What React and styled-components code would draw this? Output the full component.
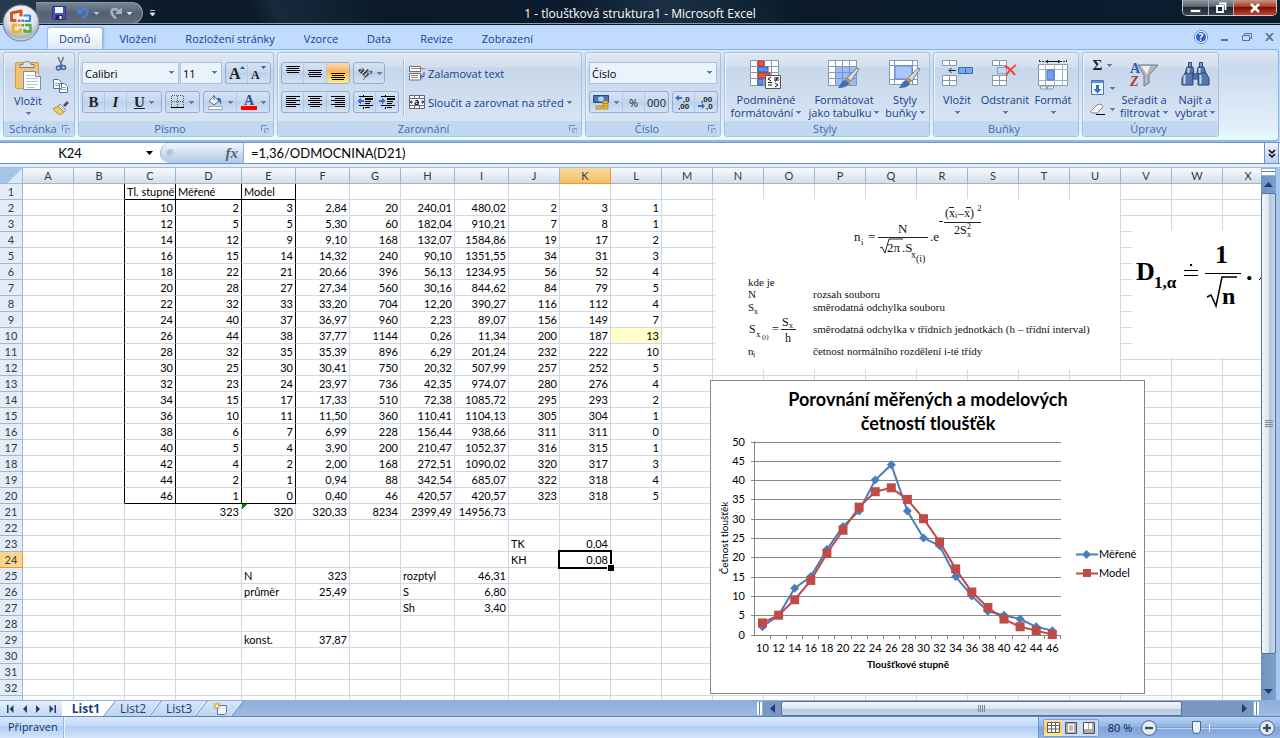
import React, { useState } from 'react';
import styled, { createGlobalStyle, css } from 'styled-components';

const GlobalStyle = createGlobalStyle`
  * { box-sizing: border-box; }
  body {
    margin: 0;
    font-family: 'Open Sans', 'Noto Sans', sans-serif;
    font-size: 11px;
    color: #15428b;
    background: #bfdbff;
  }
  button, input, select {
    font: inherit;
    color: inherit;
    margin: 0;
    padding: 0;
    border: none;
    background: none;
    outline: none;
  }
  svg { display: block; }
`;

const sheetFont = "Lato, 'Open Sans', sans-serif";

/* ---------- data ---------- */

const columns = [
  ['A', 51], ['B', 51], ['C', 51], ['D', 66], ['E', 54], ['F', 54], ['G', 51], ['H', 54],
  ['I', 54], ['J', 51], ['K', 51], ['L', 51], ['M', 51], ['N', 51], ['O', 51], ['P', 51],
  ['Q', 51], ['R', 51], ['S', 51], ['T', 51], ['U', 51], ['V', 51], ['W', 51], ['X', 51],
];

const rows = [
  ['10', '2', '3', '2,84', '20', '240,01', '480,02', '2', '3', '1'],
  ['12', '5', '5', '5,30', '60', '182,04', '910,21', '7', '8', '1'],
  ['14', '12', '9', '9,10', '168', '132,07', '1584,86', '19', '17', '2'],
  ['16', '15', '14', '14,32', '240', '90,10', '1351,55', '34', '31', '3'],
  ['18', '22', '21', '20,66', '396', '56,13', '1234,95', '56', '52', '4'],
  ['20', '28', '27', '27,34', '560', '30,16', '844,62', '84', '79', '5'],
  ['22', '32', '33', '33,20', '704', '12,20', '390,27', '116', '112', '4'],
  ['24', '40', '37', '36,97', '960', '2,23', '89,07', '156', '149', '7'],
  ['26', '44', '38', '37,77', '1144', '0,26', '11,34', '200', '187', '13'],
  ['28', '32', '35', '35,39', '896', '6,29', '201,24', '232', '222', '10'],
  ['30', '25', '30', '30,41', '750', '20,32', '507,99', '257', '252', '5'],
  ['32', '23', '24', '23,97', '736', '42,35', '974,07', '280', '276', '4'],
  ['34', '15', '17', '17,33', '510', '72,38', '1085,72', '295', '293', '2'],
  ['36', '10', '11', '11,50', '360', '110,41', '1104,13', '305', '304', '1'],
  ['38', '6', '7', '6,99', '228', '156,44', '938,66', '311', '311', '0'],
  ['40', '5', '4', '3,90', '200', '210,47', '1052,37', '316', '315', '1'],
  ['42', '4', '2', '2,00', '168', '272,51', '1090,02', '320', '317', '3'],
  ['44', '2', '1', '0,94', '88', '342,54', '685,07', '322', '318', '4'],
  ['46', '1', '0', '0,40', '46', '420,57', '420,57', '323', '318', '5'],
];

const cells = {
  C1: 'Tl. stupně', D1: 'Měřené', E1: 'Model',
  D21: '323', E21: '320', F21: '320,33', G21: '8234', H21: '2399,49', I21: '14956,73',
  J23: 'TK', K23: '0,04', J24: 'KH', K24: '0,08',
  E25: 'N', F25: '323', H25: 'rozptyl', I25: '46,31',
  E26: 'průměr', F26: '25,49', H26: 'S', I26: '6,80',
  H27: 'Sh', I27: '3,40',
  E29: 'konst.', F29: '37,87',
};
rows.forEach((row, r) => row.forEach((v, c) => { cells[columns[c + 2][0] + (r + 2)] = v; }));

const measured = rows.map(r => Number(r[1]));
const model = rows.map(r => Number(r[2]));

/* ---------- title bar ---------- */

const Window = styled.div`
  display: flex;
  flex-direction: column;
  height: 100vh;
  overflow: hidden;
  position: relative;
`;

const TitleBar = styled.header`
  flex: none;
  height: 25px;
  display: flex;
  justify-content: space-between;
  align-items: flex-start;
  position: relative;
  border-bottom: 1px solid #0d1620;
  background: linear-gradient(60deg, #2b3f51 0%, #0c1c2c 12%, #0b1b2b 20%, #172a3c 22%, #0a1a2a 30%,
    #0b1b2c 45%, #1b3045 52%, #122638 58%, #0a1a2b 62%, #0b1d30 100%);
  box-shadow: inset 0 -1px 0 #8d98a1;
`;

const Title = styled.h1`
  position: absolute;
  inset: 0;
  margin: 0;
  text-align: center;
  font-size: 12px;
  font-weight: 400;
  line-height: 27px;
  color: #fff;
  pointer-events: none;
`;

const QuickAccess = styled.div`
  display: flex;
  align-items: center;
  margin-top: 2px;
  padding-left: 36px;
`;

const QuickPill = styled.div`
  display: flex;
  align-items: center;
  gap: 4px;
  height: 22px;
  padding: 0 10px 0 16px;
  border: 1px solid #8a97a5;
  border-left: none;
  border-radius: 0 11px 11px 0;
  background: linear-gradient(#7a8593, #536173 50%, #5d6b7d);
`;

const IconButton = styled.button`
  display: flex;
  align-items: center;
  justify-content: center;
`;

const MenuButton = styled(IconButton)`
  gap: 5px;
`;

const MoreButton = styled(IconButton)`
  margin-left: 6px;
`;

const Orb = styled.button`
  position: absolute;
  left: 2px;
  top: 4px;
  z-index: 2;
`;

const WindowButtons = styled.div`
  display: flex;
  height: 16px;
  margin-right: 3px;
  border: 1px solid #c3c9cf;
  border-top: none;
  border-radius: 0 0 5px 5px;
  overflow: hidden;
`;

const WindowButton = styled(IconButton)`
  width: ${p => (p.$close ? 43 : 25)}px;
  border-left: ${p => (p.$first ? 'none' : '1px solid #aab2ba')};
  background: ${p => (p.$close
    ? 'linear-gradient(#c99487, #a83a25 45%, #7c1005 50%, #c8412a)'
    : 'linear-gradient(#8f979f, #56616c 45%, #1a2632 50%, #39444f)')};
`;

/* ---------- ribbon ---------- */

const TabRow = styled.nav`
  flex: none;
  height: 24px;
  display: flex;
  align-items: flex-end;
  justify-content: space-between;
  padding-left: 47px;
  background: #bfdbff;
`;

const Tabs = styled.div`
  display: flex;
  gap: 5px;
`;

const Tab = styled.button`
  height: 22px;
  padding: 0 11px;
  font-size: 11px;
  line-height: 20px;
  border: 1px solid transparent;
  border-bottom: none;
  border-radius: 3px 3px 0 0;
  ${p => p.$active && css`
    border-color: #9bbbe3;
    background: linear-gradient(#fff, #eff5fc 50%, #dce7f5);
    box-shadow: 1px 0 2px #8fb4e0;
  `}
`;

const DocButtons = styled.div`
  display: flex;
  align-items: center;
  height: 24px;
  gap: 13px;
  padding-right: 6px;
`;

const Ribbon = styled.section`
  flex: none;
  height: 92px;
  display: flex;
  gap: 3px;
  padding: 2px 3px;
  margin: 0 1px 1px 0;
  border: solid #8db2e3;
  border-width: 1px 1px 1px 0;
  border-radius: 0 4px 4px 0;
  background: linear-gradient(#dbe6f4, #cfdded 15%, #c9d9ee 18%, #e4f0fa 88%, #e4ffff);
  box-shadow: 0 1px 0 #9ebde3;
`;

const GroupBox = styled.fieldset`
  display: flex;
  flex-direction: column;
  justify-content: space-between;
  width: ${p => p.$width}px;
  height: 85px;
  margin: 0;
  padding: 0;
  min-width: 0;
  border: 1px solid #a7c2e0;
  border-radius: 3px;
  background: linear-gradient(#dfe8f4, #d3dfee 17%, #c7d6ea 18%, #dbe8f7);
  box-shadow: inset 1px 1px 0 #edf3fa;
`;

const GroupBody = styled.div`
  flex: 1;
  display: flex;
  padding: ${p => p.$pad || '9px 3px 0 3px'};
  gap: ${p => p.$gap ?? 4}px;
`;

const GroupLabel = styled.div`
  display: flex;
  align-items: center;
  height: 15px;
  padding-right: 4px;
  color: #3e6aaa;
  background: #c1d8f0;
  border-radius: 0 0 3px 3px;
  span {
    flex: 1;
    text-align: center;
    line-height: 15px;
  }
`;

const Stack = styled.div`
  display: flex;
  flex-direction: column;
  gap: ${p => p.$gap ?? 7}px;
`;

const ToolRow = styled.div`
  display: flex;
  gap: 3px;
`;

const ComboPair = styled.div`
  display: flex;
  gap: 1px;
`;

const ButtonSet = styled.div`
  display: flex;
  height: 22px;
  border: 1px solid #8fafd8;
  border-radius: 3px;
  background: linear-gradient(#d6e3f3, #c6d8ee 45%, #bcd0ea 50%, #d0e2f5);
  overflow: hidden;
`;

const ToolButton = styled(IconButton)`
  width: ${p => p.$w || 22}px;
  gap: 4px;
  color: #1b2430;
  border-right: 1px solid #b3cae6;
  &:last-child { border-right: none; }
  ${p => p.$on && css`
    background: linear-gradient(#fbdbb5, #feb456 40%, #fdc85f 60%, #ffe88c);
  `}
`;

const Letter = styled.span`
  font-family: 'Liberation Serif', serif;
  font-size: 15px;
  line-height: 16px;
  font-weight: 700;
  font-style: ${p => (p.$italic ? 'italic' : 'normal')};
  text-decoration: ${p => (p.$under ? 'underline' : 'none')};
  color: ${p => p.$color || '#1b2430'};
`;

const SelectWrap = styled.label`
  position: relative;
  display: flex;
  width: ${p => p.$w}px;
  height: 22px;
  border: 1px solid #abc1de;
  background: #eaf2fb;
  color: #000;
  select {
    appearance: none;
    width: 100%;
    padding: 0 12px 0 2px;
  }
  svg {
    position: absolute;
    right: 4px;
    top: 8px;
    pointer-events: none;
  }
`;

const Separator = styled.i`
  width: 2px;
  height: 56px;
  margin-top: -3px;
  border-left: 1px solid #a3bfe0;
  border-right: 1px solid #f0f6fc;
`;

const TextButton = styled.button`
  display: flex;
  align-items: center;
  gap: 3px;
  height: 22px;
  white-space: nowrap;
`;

const BigButton = styled.button`
  display: flex;
  flex-direction: column;
  align-items: center;
  width: ${p => p.$w}px;
  padding-top: 3px;
  line-height: 13px;
  white-space: nowrap;
  > svg { margin-bottom: 3px; }
`;

const LabelLine = styled.span`
  display: flex;
  align-items: center;
  gap: 3px;
  height: 13px;
`;

/* ---------- formula bar ---------- */

const FormulaBar = styled.div`
  flex: none;
  display: flex;
  height: 22px;
  border: solid #6b93c9;
  border-width: 1px 0;
  background: #fff;
  color: #000;
  font-family: ${sheetFont};
  font-size: 13px;
`;

const NameBox = styled.div`
  display: flex;
  width: 160px;
  align-items: center;
  input {
    width: 140px;
    text-align: center;
  }
`;

const FxZone = styled.div`
  display: flex;
  align-items: center;
  justify-content: space-between;
  width: 84px;
  padding: 0 5px;
  border: solid #8fb0d9;
  border-width: 0 1px 0 1px;
  border-radius: 10px 0 0 10px;
  background: linear-gradient(#f3f7fc, #cfdef1 50%, #afc9ea);
`;

const Knob = styled.i`
  width: 9px;
  height: 9px;
  border-radius: 50%;
  background: radial-gradient(circle at 35% 35%, #b4bac4, #dfe5ed);
`;

const FormulaInput = styled.input`
  flex: 1;
  padding-left: 7px;
`;

const ExpandButton = styled(IconButton)`
  width: 15px;
  margin-right: 1px;
  border: 1px solid #6b93c9;
  border-width: 0 1px;
  background: linear-gradient(#eef4fb, #b8cfec);
`;

const BarGap = styled.div`
  flex: none;
  height: 4px;
  background: #e3edf9;
  border-bottom: 1px solid #9ebbdd;
`;

/* ---------- sheet ---------- */

const SheetArea = styled.main`
  flex: 1;
  min-height: 0;
  display: flex;
  background: #a9c7ee;
  padding-right: 4px;
`;

const Viewport = styled.div`
  flex: 1;
  min-width: 0;
  position: relative;
  overflow: hidden;
  background: #fff;
`;

const Grid = styled.table`
  table-layout: fixed;
  width: 1247px;
  border-collapse: separate;
  border-spacing: 0;
  font-family: ${sheetFont};
  font-size: 11px;
  color: #000;
`;

const HeadCell = styled.th`
  height: 16px;
  padding: 0;
  line-height: 15px;
  font-weight: 400;
  color: #27413e;
  border-right: 1px solid #9eb6ce;
  border-bottom: 1px solid #9eb6ce;
  background: ${p => (p.$row ? '#e4ecf7' : 'linear-gradient(#f8fafd, #d5deea)')};
  ${p => p.$on && css`
    background: ${p.$row ? '#ffd58d' : 'linear-gradient(#f9d99f, #f1c15f)'};
    border-color: #f29436;
  `}
`;

const Corner = styled(HeadCell)`
  background: linear-gradient(135deg, #a9c4e9 62%, #dbe8f8 62%);
`;

const Cell = styled.td`
  position: relative;
  height: 16px;
  padding: 0 2px;
  line-height: 15px;
  white-space: nowrap;
  overflow: ${p => (p.$selected ? 'visible' : 'hidden')};
  text-align: ${p => (p.$num ? 'right' : 'left')};
  border-right: 1px solid ${p => (p.$darkRight ? '#000' : '#d0d7e5')};
  border-bottom: 1px solid ${p => (p.$darkBottom ? '#000' : '#d0d7e5')};
  background: ${p => (p.$mark ? '#ffffcc' : 'transparent')};
  ${p => p.$warn && css`
    background: linear-gradient(135deg, #008000 4px, transparent 4px);
  `}
  ${p => p.$selected && css`
    z-index: 1;
    &::before {
      content: '';
      position: absolute;
      inset: -2px;
      border: 2px solid #000;
    }
    &::after {
      content: '';
      position: absolute;
      right: -4px;
      bottom: -4px;
      width: 6px;
      height: 6px;
      background: #000;
      border: solid #fff;
      border-width: 1px 0 0 1px;
    }
  `}
`;

const Floating = styled.figure`
  position: absolute;
  left: ${p => p.$x}px;
  top: ${p => p.$y}px;
  margin: 0;
  background: #fff;
`;

const VScroll = styled.div`
  width: 15px;
  display: flex;
  flex-direction: column;
  align-items: center;
  background: linear-gradient(90deg, #6f93c1, #7d9fcb);
  button { height: 17px; }
`;

const SplitHandle = styled.i`
  width: ${p => (p.$h ? 7 : 15)}px;
  height: ${p => (p.$h ? 15 : 8)}px;
  background: ${p => (p.$h
    ? 'linear-gradient(90deg, #fff 2px, #5d84b8 2px, #5d84b8 3px, #fff 3px)'
    : 'linear-gradient(#fff 2px, #5d84b8 2px, #5d84b8 3px, #fff 3px)')};
  border: 1px solid #8fb0d9;
`;

const VThumb = styled.div`
  width: 15px;
  flex: 0 1 461px;
  display: flex;
  align-items: center;
  justify-content: center;
  border: 1px solid #54709b;
  border-radius: 2px;
  background: linear-gradient(90deg, #f3f6fa, #dde5ee 50%, #b0c4da 55%, #c8d8ea);
`;

const VSpace = styled.div`
  flex: 1;
`;

/* ---------- bottom ---------- */

const SheetBar = styled.div`
  flex: none;
  display: flex;
  height: 17px;
  padding-right: 20px;
  border-top: 1px solid #8db0dd;
  border-bottom: 1px solid #5c86bf;
  background: linear-gradient(#8eaedb, #9fbbe2);
`;

const NavButtons = styled.div`
  display: flex;
  align-items: center;
  justify-content: space-around;
  width: 62px;
  padding: 0 2px;
  background: linear-gradient(#e6effa, #c2d8f3);
`;

const SheetTabs = styled.div`
  flex: 1;
  display: flex;
  overflow: hidden;
`;

const SheetTab = styled.button`
  position: relative;
  z-index: ${p => (p.$active ? 1 : 0)};
  height: 15px;
  width: ${p => p.$w}px;
  font-size: 12px;
  line-height: 15px;
  font-weight: ${p => (p.$active ? 700 : 400)};
  color: #1c3f7c;
  > span, > svg { position: relative; margin: 0 auto; }
  &::before {
    content: '';
    position: absolute;
    inset: 0 0 0 ${p => (p.$active ? '-10px' : '0')};
    transform: skewX(-38deg);
    border-right: 1px solid #6d93c6;
    background: ${p => (p.$active ? '#fff' : 'linear-gradient(#d8e6f7, #bdd3ef)')};
    box-shadow: inset -1px 0 0 #fff;
  }
`;

const HScroll = styled.div`
  flex: 0 1 504px;
  display: flex;
  align-items: center;
  background: #7897c2;
`;

const HThumb = styled.div`
  flex: 0 1 401px;
  height: 15px;
  display: flex;
  align-items: center;
  justify-content: center;
  border: 1px solid #54709b;
  border-radius: 2px;
  background: linear-gradient(#f3f6fa, #dbe3ed 50%, #b3c6dc 55%, #c3d4e7);
`;

const ArrowButton = styled(IconButton)`
  width: 18px;
  height: 15px;
`;

const StatusBar = styled.footer`
  flex: none;
  display: flex;
  height: 21px;
  background: linear-gradient(#d9e8fb, #c5dcf8 40%, #b0cdf5 45%, #d3e4fa);
`;

const StatusText = styled.div`
  width: 64px;
  padding-left: 8px;
  line-height: 20px;
  color: #15325f;
  border-right: 1px solid #9ab9e2;
`;

const StatusSpace = styled.div`
  flex: 1;
  border-left: 1px solid #eef5fd;
`;

const StatusTools = styled.div`
  display: flex;
  align-items: center;
  width: 242px;
  padding: 0 5px 0 4px;
  border-left: 1px solid #6c93c8;
  background: linear-gradient(#b9d2f3, #92b4e3 45%, #7ea3d8 50%, #93b5e4);
  color: #0f2450;
`;

const ViewButtons = styled.div`
  display: flex;
  height: 18px;
  border: 1px solid #7d9fcc;
  border-radius: 2px;
  background: #cbdcf2;
`;

const ViewButton = styled(IconButton)`
  width: 18px;
  background: ${p => (p.$on ? 'linear-gradient(#fbe0b0, #ffc552 50%, #ffe99a)' : 'none')};
`;

const ZoomText = styled.span`
  width: 42px;
  text-align: center;
`;

const ZoomSlider = styled.input`
  appearance: none;
  flex: 1;
  min-width: 0;
  height: 18px;
  background: linear-gradient(90deg, transparent 52px, #e8f0fa 52px, #e8f0fa 53px, transparent 53px) center / 100% 8px no-repeat,
    linear-gradient(#5e85bd, #e8f0fa) center / 100% 2px no-repeat;
  &::-webkit-slider-thumb {
    appearance: none;
    width: 9px;
    height: 13px;
    background: #e9f1fb;
    border: 1px solid #3f659b;
    border-radius: 1px 1px 5px 5px;
  }
`;

/* ---------- icons ---------- */

const Arrow = ({ color = '#567db1' }) => (
  <svg width="5" height="3" viewBox="0 0 5 3" shapeRendering="crispEdges"><path d="M0 0h5L2.5 3z" fill={color} /></svg>
);

const Launcher = () => (
  <svg width="8" height="8" viewBox="0 0 8 8">
    <path d="M.5 6V.5H6" fill="none" stroke="#6d91bf" />
    <path d="M3 3h5v5H3z" fill="#86a6cf" />
    <path d="M4 4l3 3M7 4.5V7H4.5" fill="none" stroke="#fff" strokeWidth=".8" />
  </svg>
);

const OfficeLogo = () => (
  <svg width="38" height="38" viewBox="0 0 38 38">
    <defs>
      <radialGradient id="orb" cx=".5" cy=".3" r=".75">
        <stop offset="0" stopColor="#fff" /><stop offset=".55" stopColor="#dde3ea" /><stop offset=".8" stopColor="#a9b4c2" /><stop offset="1" stopColor="#f5f8fb" />
      </radialGradient>
    </defs>
    <circle cx="19" cy="19" r="18" fill="url(#orb)" stroke="#6f8094" />
    <g fill="none" strokeLinejoin="round">
      <path d="M14.500 16.500H9.500V9l9.500-2v5.500" stroke="#e0501c" strokeWidth="3" />
      <path d="M22.500 17h5.500v-5.500h-6.500" stroke="#3a8ad0" strokeWidth="2.200" />
      <path d="M15 21h-4v7h7.500V24.500" stroke="#f4b21b" strokeWidth="2.800" />
      <path d="M23 21h5.500v6.500h-6V25" stroke="#62a63c" strokeWidth="2.400" />
    </g>
    <path d="M16 15.500h2.500V18H16z" fill="#e0501c" /><path d="M19.500 15.500H22V18h-2.500z" fill="#3a8ad0" />
    <path d="M16 20h2.500v2.500H16z" fill="#f4b21b" /><path d="M19.500 20H22v2.500h-2.500z" fill="#62a63c" />
  </svg>
);

const SaveIcon = () => (
  <svg width="14" height="14" viewBox="0 0 14 14">
    <path d="M.5.5h13v13h-12l-1-1z" fill="#4a50b8" stroke="#2b2f86" />
    <path d="M3 1h8v6H3z" fill="#f4f6ff" /><path d="M3.5 9h7v4.5h-7z" fill="#23265c" /><path d="M7.5 10h2v3h-2z" fill="#fff" />
  </svg>
);

const UndoIcon = ({ flip }) => (
  <svg width="14" height="14" viewBox="0 0 14 14">
    <g transform={flip ? 'translate(14 0) scale(-1 1)' : undefined} fill="none" stroke={flip ? '#a3b1c2' : '#4a7fd6'}>
      <path d="M4 6C6 2 11 2 11.5 5.500c.2 3-2 4.500-4.500 7" strokeWidth="2.600" />
      <path d="M1.500 2v5.500H7z" fill={flip ? '#a3b1c2' : '#4a7fd6'} strokeWidth="1" />
    </g>
  </svg>
);

const Lines = ({ rows: list, y = 2 }) => (
  <svg width="14" height="14" viewBox="0 0 14 14" shapeRendering="crispEdges">
    {list.map(([x, w], i) => <rect key={i} x={x} y={y + i * 2} width={w} height="1" fill="#000" />)}
  </svg>
);

const IndentIcon = ({ right }) => (
  <svg width="16" height="14" viewBox="0 0 16 14" shapeRendering="crispEdges">
    <path d="M2 1h14v1H2zM8 3h8v2H8zM8 6h6v1H8zM8 8h5v1H8zM2 10h14v1H2zM6 0h1v2H6zM6 12h1v2H6zM8 12h5v1H8z" fill="#000" />
    <path d={right ? 'M0 5h3V3l4 3-4 3V7H0z' : 'M7 5H4V3L0 6l4 3V7h3z'} fill="#3a6fd0" />
  </svg>
);

const OrientIcon = () => (
  <svg width="16" height="16" viewBox="0 0 16 16">
    <text x="0" y="9" fontSize="11" fontFamily="Liberation Serif, serif" fontWeight="700" fill="#333" transform="rotate(45 5 8)">ab</text>
    <path d="M6 15L15 6M15 6l-3.500.8M15 6l-.7 3.500" stroke="#666" fill="none" />
  </svg>
);

const WrapIcon = () => (
  <svg width="16" height="15" viewBox="0 0 16 15">
    <path d="M.5.500h11v5H.500zM.5 7.500h11v6.500H.500z" fill="#fff" stroke="#5c7290" />
    <path d="M2 2.500h14M2 9.500h7M2 11.500h7" stroke="#c07a36" />
    <path d="M15 6v4.500h-2.500M13.500 8.500l-2 2 2 2" fill="none" stroke="#35599a" />
  </svg>
);

const MergeIcon = () => (
  <svg width="16" height="14" viewBox="0 0 16 14">
    <path d="M.5.500h15v13H.500z" fill="#fff" stroke="#5f6b7c" />
    <path d="M0 3.500h16M0 10.500h16M5.500 0v3.500M10.500 0v3.500M5.500 10.500V14M10.500 10.500V14" stroke="#5f6b7c" />
    <path d="M1 7h3M12 7h3M3 5.500L1 7l2 1.500M13 5.500L15 7l-2 1.500" stroke="#333" fill="none" />
    <text x="5" y="10" fontSize="9" fontWeight="700" fill="#111">a</text>
  </svg>
);

const BorderIcon = () => (
  <svg width="14" height="14" viewBox="0 0 14 14" shapeRendering="crispEdges">
    <path d="M.5.5h12v12M.5.5v12M6.5.5v12M.5 6.5h12" stroke="#555" strokeDasharray="1 1" fill="none" />
    <path d="M0 12h13v1H0z" fill="#000" />
  </svg>
);

const FillIcon = () => (
  <svg width="17" height="16" viewBox="0 0 17 16">
    <path d="M2 7l5-5 5 5-5 4z" fill="#eef3fa" stroke="#5b6a80" />
    <path d="M7 1v5" stroke="#5b6a80" /><path d="M10 4c4-1 5 2 4 7-1-2-1-3-3-4z" fill="#3a6fc4" />
    <path d="M1.500 12.500h14v3h-14z" fill="#fff" stroke="#98a6b8" />
  </svg>
);

const FontColorIcon = () => (
  <svg width="16" height="16" viewBox="0 0 16 16">
    <text x="3" y="11" fontSize="14" fontWeight="700" fontFamily="Liberation Serif, serif" fill="#2d4f8e">A</text>
    <path d="M0 12h16v4H0z" fill="#f00" />
  </svg>
);

const SizeIcon = ({ down }) => (
  <svg width="16" height="16" viewBox="0 0 16 16">
    <text x="0" y="14" fontSize={down ? 12 : 16} fontWeight="700" fontFamily="Liberation Serif, serif" fill="#222">A</text>
    <path d={down ? 'M10 1h5l-2.500 3z' : 'M11 4h5l-2.500-3z'} fill="#33589a" />
  </svg>
);

const PasteIcon = () => (
  <svg width="28" height="31" viewBox="0 0 28 31">
    <rect x="1.500" y="2.500" width="23" height="26" rx="1.500" fill="#f0c46c" stroke="#cf9c44" />
    <path d="M6 4.500h3c0-4 8-4 8 0h3v3H6z" fill="#dfe2e6" stroke="#777f8b" />
    <path d="M9.500 11.500h12l5 5v13h-17z" fill="#fff" stroke="#7b8fae" />
    <path d="M21.500 11.500v5h5" fill="#dce6f3" stroke="#7b8fae" />
    <path d="M12 15.500h8M12 18.500h12M12 21.500h12M12 24.500h12M12 27.500h9" stroke="#b5c4d8" />
  </svg>
);

const CutIcon = () => (
  <svg width="12" height="14" viewBox="0 0 12 14">
    <path d="M3 0l4 9M8.500 0L5 9" stroke="#66758b" strokeWidth="1.500" />
    <circle cx="3.500" cy="11" r="2" fill="none" stroke="#3b63a8" strokeWidth="1.500" /><circle cx="8.500" cy="10.500" r="2" fill="none" stroke="#3b63a8" strokeWidth="1.500" />
  </svg>
);

const CopyIcon = () => (
  <svg width="16" height="14" viewBox="0 0 16 14">
    <path d="M.5.5h5l3 3v6h-8zM6.500 4.500h5l3 3v6h-8z" fill="#fff" stroke="#4a74b8" />
    <path d="M2 4.500h4M2 6.500h4M8 8.500h5M8 10.500h5" stroke="#7fa2d8" />
  </svg>
);

const BrushIcon = () => (
  <svg width="16" height="14" viewBox="0 0 16 14">
    <path d="M10 4l4-4 2 2-4 4z" fill="#5a4a76" /><path d="M7 3l6 6-2 2-6-6z" fill="#d8dce4" stroke="#8890a0" />
    <path d="M5 5l6 6-3 3c-3-1-6-3-8-6z" fill="#e8cc5e" stroke="#b6963a" />
  </svg>
);

const MoneyIcon = () => (
  <svg width="17" height="16" viewBox="0 0 17 16">
    <path d="M.5 1.500h15v7H.500z" fill="#4b73b5" stroke="#274a86" /><ellipse cx="8" cy="5" rx="3" ry="2.500" fill="#b9cdec" />
    <path d="M10 7h5v8h-5zM3 12h6v3H3z" fill="#f1bd3c" stroke="#b57d18" strokeWidth=".8" />
    <path d="M10 9.500h5M10 12h5" stroke="#b57d18" />
  </svg>
);

const DecimalIcon = ({ less }) => (
  <svg width="17" height="16" viewBox="0 0 17 16" fontFamily="Liberation Sans, sans-serif" fontWeight="700">
    <text x={less ? 3 : 8} y="8" fontSize="8" fill="#222">{less ? ',00' : ',0'}</text>
    <text x={less ? 8 : 3} y="15" fontSize="8" fill="#222">{less ? ',0' : ',00'}</text>
    <path d={less ? 'M0 11h4V9l3 3-3 3v-2H0z' : 'M7 3H4V1L0 4l4 3V5h3z'} fill="#3a6fd0" />
  </svg>
);

const GridPaper = ({ w = 29, h = 26, x = 0, y = 0 }) => (
  <g>
    <path d={`M${x + 0.5} ${y + 0.5}h${w - 1}v${h - 1}h-${w - 1}z`} fill="#fff" stroke="#8797af" />
    <path
      d={`M${x} ${y + 6.5}h${w}M${x} ${y + 12.5}h${w}M${x} ${y + 18.5}h${w}M${x + 7.5} ${y}v${h}M${x + 14.5} ${y}v${h}M${x + 21.5} ${y}v${h}`}
      stroke="#8797af"
      fill="none"
    />
  </g>
);

const Brush = () => (
  <g>
    <path d="M29 8l2 1-8 12-4-3z" fill="#d5d8dc" stroke="#71767e" /><path d="M19 17l4 4-2 2-4-3z" fill="#c98d3e" />
    <path d="M17 20l4 3c-1 4-6 5-11 5 2-2 3-7 7-8z" fill="#3f6db8" />
  </g>
);

const ConditionalIcon = () => (
  <svg width="32" height="30" viewBox="0 0 32 30">
    <GridPaper />
    <path d="M8 1h6v5H8zM8 13h12v5H8z" fill="#f2553d" stroke="#b8321f" /><path d="M8 7h10v5H8zM8 19h5v6H8z" fill="#5f8fe6" stroke="#2f5bb0" />
    <path d="M15.500 15.500h15v13h-15z" fill="#fff" stroke="#555" />
    <path d="M21 17l-3 2 3 2M18 22.500h4M18 25h4M24 18h5M24 20h5M27.500 17l-2 4.500M25 23l3 2-3 2" stroke="#111" fill="none" />
  </svg>
);

const FormatTableIcon = () => (
  <svg width="32" height="30" viewBox="0 0 32 30">
    <GridPaper />
    <path d="M8 7h20v18H8z" fill="#9bbcf3" /><path d="M8 12.500h20M8 18.500h20M14.500 7v18M21.500 7v18" stroke="#6d93d8" />
    <Brush />
  </svg>
);

const CellStylesIcon = () => (
  <svg width="32" height="30" viewBox="0 0 32 30">
    <path d="M.5.500h28v24H.500z" fill="#fff" stroke="#8797af" />
    <path d="M0 5.500h29M0 19.500h29M5.500 0v25M23.500 0v25" stroke="#8797af" />
    <path d="M6 6h17v13H6z" fill="#a9c7f8" stroke="#5b8be0" />
    <Brush />
  </svg>
);

const InsertIcon = () => (
  <svg width="31" height="30" viewBox="0 0 31 30">
    <path d="M.5.500h14v5H.500zM.5 15.500h14v10H.500zM7.500.5v5M7.500 15.500v10M.5 20.500h14" fill="#fff" stroke="#8797af" />
    <path d="M16.500 7.500h14v6h-14zM23.500 7.500v6" fill="#7fa8ec" stroke="#3e68b0" />
    <path d="M14 10.500H7M9.500 8L7 10.500 9.500 13" fill="none" stroke="#222" />
  </svg>
);

const DeleteIcon = () => (
  <svg width="26" height="30" viewBox="0 0 26 30">
    <path d="M.5.500h14v5H.500zM.5 15.500h14v10H.500zM7.500.5v5M7.500 15.500v10M.5 20.500h14" fill="#fff" stroke="#8797af" />
    <path d="M5.500 7.500h9v6h-9z" fill="none" stroke="#3e68d0" strokeDasharray="1 1" />
    <path d="M13 6c4 2 7 5 10 9M24 5c-4 3-8 6-10 11" fill="none" stroke="#ee4a32" strokeWidth="2" />
  </svg>
);

const FormatIcon = () => (
  <svg width="31" height="30" viewBox="0 0 31 30">
    <path d="M1 1.500h28M1.500 0v3M28.500 0v3" stroke="#333" strokeDasharray="2 1" />
    <path d="M8 1.500h14M10 0L8 1.500 10 3M20 0l2 1.500L20 3" stroke="#111" fill="none" />
    <path d="M.5 4.500h29v21H.500z" fill="#fff" stroke="#8797af" /><path d="M0 9.500h30M0 20.500h30M7.500 4v22M16.500 4v22M24.500 4v22" stroke="#9fb0c8" />
    <path d="M9 10h7v10H9z" fill="#6f9df0" stroke="#4674c8" /><path d="M2 26h6l1 3H3zM10 26h6l-1 3h-6z" fill="#e9edf3" stroke="#8797af" />
  </svg>
);

const FillDownIcon = () => (
  <svg width="14" height="16" viewBox="0 0 14 16">
    <path d="M.5.500h12v14H.500z" fill="#f2f7fd" stroke="#4a74b8" /><path d="M1 1h11v2H1z" fill="#5f8fe0" />
    <path d="M5 5h3v4h2.500l-4 4.500-4-4.500H5z" fill="#2f6be0" />
  </svg>
);

const EraserIcon = () => (
  <svg width="15" height="13" viewBox="0 0 15 13">
    <path d="M1 8l6-6c1-1 4-1 5 0s1 2 0 3l-5 5H3C1 10 .5 9 1 8z" fill="#fff" stroke="#77808c" /><path d="M6 11.500h9" stroke="#000" />
  </svg>
);

const SortFilterIcon = () => (
  <svg width="30" height="30" viewBox="0 0 30 30">
    <text x="1" y="13" fontSize="14" fontWeight="700" fontFamily="Liberation Serif, serif" fill="#2f5bb0">A</text>
    <text x="1" y="26" fontSize="14" fontWeight="700" fontStyle="italic" fontFamily="Liberation Serif, serif" fill="#a63a30">Z</text>
    <path d="M9 5h20L20 15v8l-5 3V15z" fill="#b3b6ba" stroke="#75797f" /><path d="M12 6h9l-3 8z" fill="#eceef0" />
  </svg>
);

const FindIcon = () => (
  <svg width="29" height="30" viewBox="0 0 29 30">
    <g fill="#5578b0" stroke="#2c4876">
      <path d="M6 7h6l1 7H4zM17 7h6l2 7h-9z" /><path d="M7.500 2.500h3V7h-3zM18.500 2.500h3V7h-3z" fill="#7e9ccc" />
      <path d="M1 18l3-5h8v12H1zM28 18l-3-5h-8v12h11z" /><path d="M12 14h5v5h-5z" />
    </g>
    <path d="M3.500 15v9M19.500 15v9M7.500 8v5M18.500 8v5" stroke="#c3d5f0" strokeWidth="2" />
  </svg>
);

const HelpIcon = () => (
  <svg width="14" height="14" viewBox="0 0 14 14">
    <circle cx="7" cy="7" r="6.500" fill="#fff" stroke="#5f86bd" /><circle cx="7" cy="7" r="5" fill="#2860cc" />
    <text x="4.500" y="10.500" fontSize="10" fontWeight="700" fill="#fff">?</text>
  </svg>
);

const NewSheetIcon = () => (
  <svg width="15" height="13" viewBox="0 0 15 13">
    <path d="M4.500 3.500h9v7l-2 2h-7z" fill="#f4f8fd" stroke="#5a78a6" />
    <path d="M4 0v8M0 4h8M1 1l6 6M7 1L1 7" stroke="#e08a2a" /><circle cx="4" cy="4" r="1.500" fill="#fff2b0" />
  </svg>
);

const RoundSign = ({ plus }) => (
  <svg width="16" height="16" viewBox="0 0 16 16">
    <circle cx="8" cy="8" r="7.300" fill="#e6eef8" stroke="#44628f" />
    <path d={plus ? 'M4 8h8M8 4v8' : 'M4 8h8'} stroke="#3c4d66" strokeWidth="2.400" />
  </svg>
);

/* ---------- ribbon parts ---------- */

const Combo = ({ label, value, w }) => (
  <SelectWrap $w={w}>
    <select aria-label={label} defaultValue={value}><option>{value}</option></select>
    <Arrow />
  </SelectWrap>
);

const Group = ({ label, width, launcher, children, pad, gap }) => (
  <GroupBox $width={width} aria-label={label}>
    <GroupBody $pad={pad} $gap={gap}>{children}</GroupBody>
    <GroupLabel><span>{label}</span>{launcher && <Launcher />}</GroupLabel>
  </GroupBox>
);

const Big = ({ icon, lines, w }) => (
  <BigButton $w={w}>
    {icon}
    <LabelLine>{lines[0]}</LabelLine>
    <LabelLine>{lines[1]}<Arrow /></LabelLine>
  </BigButton>
);

const full = [0, 14];
const HomeRibbon = () => (
  <Ribbon>
    <Group label="Schránka" width={72} launcher pad="4px 2px 0" gap={3}>
      <Big w={44} icon={<PasteIcon />} lines={['Vložit']} />
      <Stack $gap={8}>
        <IconButton aria-label="Vyjmout"><CutIcon /></IconButton>
        <IconButton aria-label="Kopírovat"><CopyIcon /></IconButton>
        <IconButton aria-label="Kopírovat formát"><BrushIcon /></IconButton>
      </Stack>
    </Group>
    <Group label="Písmo" width={196} launcher>
      <Stack>
        <ToolRow>
          <ComboPair>
            <Combo label="Písmo" value="Calibri" w={97} />
            <Combo label="Velikost písma" value="11" w={42} />
          </ComboPair>
          <ButtonSet>
            <ToolButton aria-label="Zvětšit písmo"><SizeIcon /></ToolButton>
            <ToolButton aria-label="Zmenšit písmo"><SizeIcon down /></ToolButton>
          </ButtonSet>
        </ToolRow>
        <ToolRow>
          <ButtonSet>
            <ToolButton><Letter>B</Letter></ToolButton>
            <ToolButton><Letter $italic>I</Letter></ToolButton>
            <ToolButton $w={34}><Letter $under>U</Letter><Arrow /></ToolButton>
          </ButtonSet>
          <ButtonSet>
            <ToolButton $w={33} aria-label="Ohraničení"><BorderIcon /><Arrow /></ToolButton>
          </ButtonSet>
          <ButtonSet>
            <ToolButton $w={33} aria-label="Barva výplně"><FillIcon /><Arrow /></ToolButton>
            <ToolButton $w={32} aria-label="Barva písma"><FontColorIcon /><Arrow /></ToolButton>
          </ButtonSet>
        </ToolRow>
      </Stack>
    </Group>
    <Group label="Zarovnání" width={305} launcher>
      <Stack>
        <ToolRow>
          <ButtonSet>
            <ToolButton aria-label="Zarovnat nahoru"><Lines y={0} rows={[full, [1, 12], full, [1, 12]]} /></ToolButton>
            <ToolButton aria-label="Zarovnat na střed" $w={23}><Lines y={4} rows={[full, [1, 12], full, [1, 12]]} /></ToolButton>
            <ToolButton aria-label="Zarovnat dolů" $on><Lines y={7} rows={[full, [1, 12], full, [1, 12]]} /></ToolButton>
          </ButtonSet>
          <ButtonSet>
            <ToolButton aria-label="Orientace" $w={30}><OrientIcon /><Arrow /></ToolButton>
          </ButtonSet>
        </ToolRow>
        <ToolRow>
          <ButtonSet>
            <ToolButton aria-label="Vlevo"><Lines y={1} rows={[full, [0, 10], full, [0, 10], full, [0, 10]]} /></ToolButton>
            <ToolButton aria-label="Na střed" $w={23}><Lines y={1} rows={[full, [2, 10], full, [2, 10], full, [2, 10]]} /></ToolButton>
            <ToolButton aria-label="Vpravo"><Lines y={1} rows={[full, [4, 10], full, [4, 10], full, [4, 10]]} /></ToolButton>
          </ButtonSet>
          <ButtonSet>
            <ToolButton aria-label="Zmenšit odsazení"><IndentIcon /></ToolButton>
            <ToolButton aria-label="Zvětšit odsazení"><IndentIcon right /></ToolButton>
          </ButtonSet>
        </ToolRow>
      </Stack>
      <Separator />
      <Stack>
        <TextButton><WrapIcon />Zalamovat text</TextButton>
        <TextButton><MergeIcon />Sloučit a zarovnat na střed<Arrow /></TextButton>
      </Stack>
    </Group>
    <Group label="Číslo" width={136} launcher>
      <Stack>
        <Combo label="Formát čísla" value="Číslo" w={128} />
        <ToolRow>
          <ButtonSet>
            <ToolButton $w={33} aria-label="Účetní formát"><MoneyIcon /><Arrow /></ToolButton>
            <ToolButton>%</ToolButton>
            <ToolButton $w={23}>000</ToolButton>
          </ButtonSet>
          <ButtonSet>
            <ToolButton aria-label="Přidat desetinné místo"><DecimalIcon /></ToolButton>
            <ToolButton aria-label="Odebrat desetinné místo"><DecimalIcon less /></ToolButton>
          </ButtonSet>
        </ToolRow>
      </Stack>
    </Group>
    <Group label="Styly" width={206} pad="4px 2px 0" gap={1}>
      <Big w={78} icon={<ConditionalIcon />} lines={['Podmíněné', 'formátování']} />
      <Big w={76} icon={<FormatTableIcon />} lines={['Formátovat', 'jako tabulku']} />
      <Big w={44} icon={<CellStylesIcon />} lines={['Styly', 'buňky']} />
    </Group>
    <Group label="Buňky" width={146} pad="4px 1px 0" gap={0}>
      <Big w={44} icon={<InsertIcon />} lines={['Vložit']} />
      <Big w={52} icon={<DeleteIcon />} lines={['Odstranit']} />
      <Big w={44} icon={<FormatIcon />} lines={['Formát']} />
    </Group>
    <Group label="Úpravy" width={137} pad="4px 1px 0 7px" gap={3}>
      <Stack $gap={7}>
        <MenuButton aria-label="Součet"><Letter>Σ</Letter><Arrow /></MenuButton>
        <MenuButton aria-label="Vyplnit"><FillDownIcon /><Arrow /></MenuButton>
        <MenuButton aria-label="Vymazat"><EraserIcon /><Arrow /></MenuButton>
      </Stack>
      <Big w={52} icon={<SortFilterIcon />} lines={['Seřadit a', 'filtrovat']} />
      <Big w={44} icon={<FindIcon />} lines={['Najít a', 'vybrat']} />
    </Group>
  </Ribbon>
);

/* ---------- sheet parts ---------- */

const lastRow = 32;
const isNumber = v => /^[\d,]+$/.test(v);

const Spreadsheet = ({ selected }) => (
  <Grid>
    <colgroup>
      <col style={{ width: 23 }} />
      {columns.map(([name, w]) => <col key={name} style={{ width: w }} />)}
    </colgroup>
    <thead>
      <tr>
        <Corner aria-label="Vybrat vše" />
        {columns.map(([name]) => <HeadCell key={name} $on={selected.startsWith(name)}>{name}</HeadCell>)}
      </tr>
    </thead>
    <tbody>
      {Array.from({ length: lastRow + 1 }, (_, i) => i + 1).map(r => (
        <tr key={r}>
          <HeadCell $row $on={selected.slice(1) === String(r)}>{r <= lastRow ? r : ''}</HeadCell>
          {columns.map(([name]) => {
            const id = name + r;
            const v = cells[id] || '';
            return (
              <Cell
                key={id}
                $num={isNumber(v)}
                $selected={id === selected}
                $mark={id === 'L10'}
                $warn={id === 'E21'}
                $darkRight={r <= 20 && 'BCDE'.includes(name)}
                $darkBottom={(r === 1 || r === 20) && 'CDE'.includes(name)}
              >
                {v}
              </Cell>
            );
          })}
        </tr>
      ))}
    </tbody>
  </Grid>
);

const DensityFormula = () => (
  <svg width="405" height="171" viewBox="0 0 405 171" fontFamily="'Liberation Serif', serif" fontSize="11" fill="#111">
    <g fontSize="13">
      <text x="139" y="42">n</text><text x="146" y="46" fontSize="9">i</text><text x="153" y="42">=</text>
      <text x="183" y="34">N</text>
      <text x="172" y="53">2π</text><text x="187" y="53">.S</text><text x="196" y="59" fontSize="10">x</text>
      <text x="201" y="63" fontSize="10">(i)</text>
      <text x="215" y="42">.e</text>
    </g>
    <path d="M163 38.500h50M165 49l2-1 3 6 4-14h14M229 23.500h37M224 22.500h4M234 8.500h5M251 8.500h5" fill="none" stroke="#222" />
    <g fontSize="12">
      <text x="230" y="18">(x</text><text x="240" y="19" fontSize="8">i</text><text x="243" y="18">–x)</text><text x="262" y="12" fontSize="9">2</text>
      <text x="239" y="35">2S</text><text x="252" y="30" fontSize="8">2</text><text x="252" y="38" fontSize="8">x</text>
    </g>
    <text x="33" y="87">kde je</text>
    <text x="33" y="99">N</text><text x="98" y="99">rozsah souboru</text>
    <text x="33" y="112">S</text><text x="39" y="115" fontSize="8">x</text><text x="98" y="112">směrodatná odchylka souboru</text>
    <text x="34" y="134" fontSize="12">S</text><text x="41" y="138" fontSize="9">x</text><text x="47" y="140" fontSize="7">(i)</text>
    <text x="57" y="134" fontSize="12">=</text><path d="M66 130.500h15" stroke="#222" />
    <text x="67" y="127" fontSize="12">S</text><text x="74" y="129" fontSize="8">x</text><text x="70" y="143" fontSize="12">h</text>
    <text x="98" y="134">směrodatná odchylka v třídních jednotkách (h – třídní interval)</text>
    <text x="33" y="156">n</text><text x="38" y="158" fontSize="8">i</text><text x="98" y="156">četnost normálního rozdělení i-té třídy</text>
  </svg>
);

const LimitFormula = () => (
  <svg width="129" height="127" viewBox="0 0 129 127" fontFamily="'Liberation Serif', serif" fontWeight="700" fontSize="26" fill="#000">
    <text x="4" y="50">D</text><text x="22" y="58" fontSize="17">1,α</text>
    <path d="M52 40.500h14M52 45.500h14" stroke="#000" /><path d="M58 34h2v2h-2z" />
    <text x="83" y="33">1</text><path d="M73 43.500h36" stroke="#000" />
    <path d="M75 67l4-2 5 11 6-29h15" fill="none" stroke="#000" strokeWidth="1.500" />
    <text x="90" y="74" fontSize="24">n</text><text x="114" y="50">.</text><path d="M127 50l2-2" stroke="#000" />
  </svg>
);

const px = i => 52.5 + i * 16.1;
const py = v => 254.5 - v * 3.86;
const line = data => data.map((v, i) => `${px(i)},${py(v)}`).join(' ');
const diamond = (x, y) => `M${x} ${y - 4.5}l4.500 4.500-4.500 4.500-4.500-4.500z`;

const Chart = () => (
  <svg width="435" height="314" viewBox="0 0 435 314" fontFamily={sheetFont} fontSize="11" fill="#000" role="img">
    <rect x=".5" y=".5" width="434" height="313" fill="#fff" stroke="#868686" />
    <g fontSize="18" fontWeight="700" textAnchor="middle">
      <text x="218" y="26">Porovnání měřených a modelových</text>
      <text x="218" y="50">četností tloušťěk</text>
    </g>
    {Array.from({ length: 11 }, (_, i) => i * 5).map(v => (
      <g key={v}>
        <path d={`M41 ${Math.round(py(v)) + 0.5}h310`} stroke="#868686" />
        <text x="35" y={Math.round(py(v)) + 4} textAnchor="end">{v}</text>
      </g>
    ))}
    <path d={`M44.500 61v194${Array.from({ length: 19 }, (_, i) => `M${Math.round(60 + i * 16.1) + 0.5} 255v4`).join('')}`} stroke="#868686" fill="none" />
    {rows.map((r, i) => <text key={r[0]} x={px(i)} y="272" textAnchor="middle">{r[0]}</text>)}
    <g fontSize="10" fontWeight="700" textAnchor="middle">
      <text x="198" y="288">Tloušťkové stupně</text>
      <text x="18" y="158" fontWeight="400" transform="rotate(-90 18 158)">Četnost tloušťěk</text>
    </g>
    <polyline points={line(measured)} fill="none" stroke="#4a7ebb" strokeWidth="2" />
    {measured.map((v, i) => <path key={i} d={diamond(px(i), py(v))} fill="#4a7ebb" />)}
    <polyline points={line(model)} fill="none" stroke="#be4b48" strokeWidth="2" />
    {model.map((v, i) => <rect key={i} x={px(i) - 4.5} y={py(v) - 4.5} width="9" height="9" fill="#be4b48" />)}
    <path d="M366 174.500h22" stroke="#4a7ebb" strokeWidth="2" /><path d={diamond(376.5, 174.5)} fill="#4a7ebb" />
    <text x="389" y="178">Měřené</text>
    <path d="M366 193.500h22" stroke="#be4b48" strokeWidth="2" /><path d="M373 189h8v8h-8z" fill="#be4b48" />
    <text x="389" y="197">Model</text>
  </svg>
);

const Tri = ({ d, w = 6, h = 8 }) => (
  <svg width={w} height={h} viewBox={`0 0 ${w} ${h}`}><path d={d} fill="#1f3f72" /></svg>
);

const ribbonTabs = ['Domů', 'Vložení', 'Rozložení stránky', 'Vzorce', 'Data', 'Revize', 'Zobrazení'];

const App = () => {
  const [tab, setTab] = useState('Domů');
  const [sheet, setSheet] = useState('List1');
  const [formula, setFormula] = useState('=1,36/ODMOCNINA(D21)');

  return (
    <Window>
      <GlobalStyle />
      <TitleBar>
        <QuickAccess>
          <QuickPill>
            <IconButton aria-label="Uložit"><SaveIcon /></IconButton>
            <MoreButton aria-label="Zpět"><UndoIcon /></MoreButton>
            <IconButton aria-label="Možnosti zpět"><Arrow color="#a9c4ea" /></IconButton>
            <MoreButton aria-label="Znovu"><UndoIcon flip /></MoreButton>
            <IconButton aria-label="Možnosti znovu"><Arrow color="#dfe4ea" /></IconButton>
          </QuickPill>
          <MoreButton aria-label="Přizpůsobit panel">
            <svg width="7" height="7" viewBox="0 0 7 7"><path d="M1 .5h5M1 3h5L3.500 6z" stroke="#dfe8f4" fill="#dfe8f4" strokeWidth=".8" /></svg>
          </MoreButton>
        </QuickAccess>
        <Title>1 - tloušťková struktura1 - Microsoft Excel</Title>
        <WindowButtons>
          <WindowButton $first aria-label="Minimalizovat">
            <svg width="11" height="12" viewBox="0 0 11 12"><path d="M.5 7.500h10v3H.500z" fill="#fff" stroke="#555" /></svg>
          </WindowButton>
          <WindowButton aria-label="Obnovit">
            <svg width="12" height="12" viewBox="0 0 12 12"><path d="M4 1.500h6.500V8M2 4h6v6H2z" fill="none" stroke="#fff" strokeWidth="1.800" /></svg>
          </WindowButton>
          <WindowButton $close aria-label="Zavřít">
            <svg width="12" height="12" viewBox="0 0 12 12"><path d="M2 2l8 8M10 2l-8 8" stroke="#fff" strokeWidth="2.600" /></svg>
          </WindowButton>
        </WindowButtons>
      </TitleBar>
      <Orb aria-label="Tlačítko Office"><OfficeLogo /></Orb>

      <TabRow>
        <Tabs>
          {ribbonTabs.map(t => <Tab key={t} $active={t === tab} onClick={() => setTab(t)}>{t}</Tab>)}
        </Tabs>
        <DocButtons>
          <IconButton aria-label="Nápověda"><HelpIcon /></IconButton>
          <IconButton aria-label="Minimalizovat okno"><svg width="8" height="8" viewBox="0 0 8 8"><path d="M0 6h7v2H0z" fill="#5f6f86" /></svg></IconButton>
          <IconButton aria-label="Obnovit okno"><svg width="10" height="8" viewBox="0 0 10 8"><path d="M2.500 2V.5h7v5H8M.5 2.500h7v5h-7z" fill="none" stroke="#5f6f86" /></svg></IconButton>
          <IconButton aria-label="Zavřít okno"><svg width="9" height="8" viewBox="0 0 9 8"><path d="M1 0l7 8M8 0L1 8" stroke="#5f6f86" strokeWidth="1.800" /></svg></IconButton>
        </DocButtons>
      </TabRow>

      <HomeRibbon />

      <FormulaBar>
        <NameBox>
          <input aria-label="Pole názvů" defaultValue="K24" />
          <IconButton aria-label="Názvy">
            <svg width="18" height="4" viewBox="0 0 18 4"><path d="M6 0h7L9.500 4z" fill="#000" /></svg>
          </IconButton>
        </NameBox>
        <FxZone>
          <Knob />
          <IconButton aria-label="Vložit funkci"><Letter $italic $color="#59626e">fx</Letter></IconButton>
        </FxZone>
        <FormulaInput aria-label="Řádek vzorců" value={formula} onChange={e => setFormula(e.target.value)} />
        <ExpandButton aria-label="Rozbalit řádek vzorců">
          <svg width="8" height="9" viewBox="0 0 8 9"><path d="M1 1l3 3 3-3M1 5l3 3 3-3" stroke="#000" strokeWidth="1.500" fill="none" /></svg>
        </ExpandButton>
      </FormulaBar>
      <BarGap />

      <SheetArea>
        <Viewport>
          <Spreadsheet selected="K24" />
          <Floating $x={715} $y={31}><DensityFormula /></Floating>
          <Floating $x={1132} $y={62}><LimitFormula /></Floating>
          <Floating $x={710} $y={212}><Chart /></Floating>
        </Viewport>
        <VScroll>
          <SplitHandle />
          <IconButton aria-label="Nahoru"><Tri w={9} h={5} d="M0 5h9L4.500 0z" /></IconButton>
          <VThumb><svg width="8" height="7" viewBox="0 0 8 7"><path d="M0 .5h8M0 2.500h8M0 4.500h8M0 6.500h8" stroke="#7c8797" /></svg></VThumb>
          <VSpace />
          <IconButton aria-label="Dolů"><Tri w={9} h={5} d="M0 0h9L4.500 5z" /></IconButton>
        </VScroll>
      </SheetArea>

      <SheetBar>
        <NavButtons>
          <IconButton aria-label="První list"><Tri w={7} d="M0 0h1.500v8H0zM6.500 0v8L2.500 4z" /></IconButton>
          <IconButton aria-label="Předchozí list"><Tri w={4} d="M4 0v8L0 4z" /></IconButton>
          <IconButton aria-label="Další list"><Tri w={4} d="M0 0v8l4-4z" /></IconButton>
          <IconButton aria-label="Poslední list"><Tri w={7} d="M5.500 0H7v8H5.500zM0.500 0v8l4-4z" /></IconButton>
        </NavButtons>
        <SheetTabs>
          {['List1', 'List2', 'List3'].map(s => (
            <SheetTab key={s} $w={s === 'List1' ? 48 : 46} $active={s === sheet} onClick={() => setSheet(s)}><span>{s}</span></SheetTab>
          ))}
          <SheetTab $w={36} aria-label="Vložit list"><NewSheetIcon /></SheetTab>
        </SheetTabs>
        <HScroll>
          <SplitHandle $h />
          <ArrowButton aria-label="Vlevo"><Tri w={5} h={9} d="M5 0v9L0 4.500z" /></ArrowButton>
          <HThumb><svg width="8" height="7" viewBox="0 0 8 7"><path d="M.5 0v7M2.500 0v7M4.500 0v7M6.500 0v7" stroke="#7c8797" /></svg></HThumb>
          <VSpace />
          <ArrowButton aria-label="Vpravo"><Tri w={5} h={9} d="M0 0v9l5-4.500z" /></ArrowButton>
          <SplitHandle $h />
        </HScroll>
      </SheetBar>

      <StatusBar>
        <StatusText>Připraven</StatusText>
        <StatusSpace />
        <StatusTools>
          <ViewButtons>
            <ViewButton $on aria-label="Normální">
              <svg width="13" height="11" viewBox="0 0 13 11"><path d="M.5.500h12v10H.500zM.5 3.500h12M.5 7h12M4.500.5v10M8.500.5v10" fill="#fff" stroke="#5b5f66" /></svg>
            </ViewButton>
            <ViewButton aria-label="Rozložení stránky">
              <svg width="12" height="12" viewBox="0 0 12 12"><path d="M.5.500h11v11H.500z" fill="#a8acb2" stroke="#4d525a" /><path d="M3 2h6v8H3z" fill="#fff" /><path d="M4 4h4M4 6h4M4 8h4" stroke="#777" /></svg>
            </ViewButton>
            <ViewButton aria-label="Konce stránek">
              <svg width="12" height="12" viewBox="0 0 12 12"><path d="M.5.500h11v11H.500z" fill="#a8acb2" stroke="#4d525a" /><path d="M1 1h4v6H1zM6 1h3v6H6z" fill="#fff" /></svg>
            </ViewButton>
          </ViewButtons>
          <ZoomText>80 %</ZoomText>
          <IconButton aria-label="Oddálit"><RoundSign /></IconButton>
          <ZoomSlider type="range" aria-label="Lupa" min="0" max="100" defaultValue="38" />
          <IconButton aria-label="Přiblížit"><RoundSign plus /></IconButton>
        </StatusTools>
      </StatusBar>
    </Window>
  );
};

export default App;
